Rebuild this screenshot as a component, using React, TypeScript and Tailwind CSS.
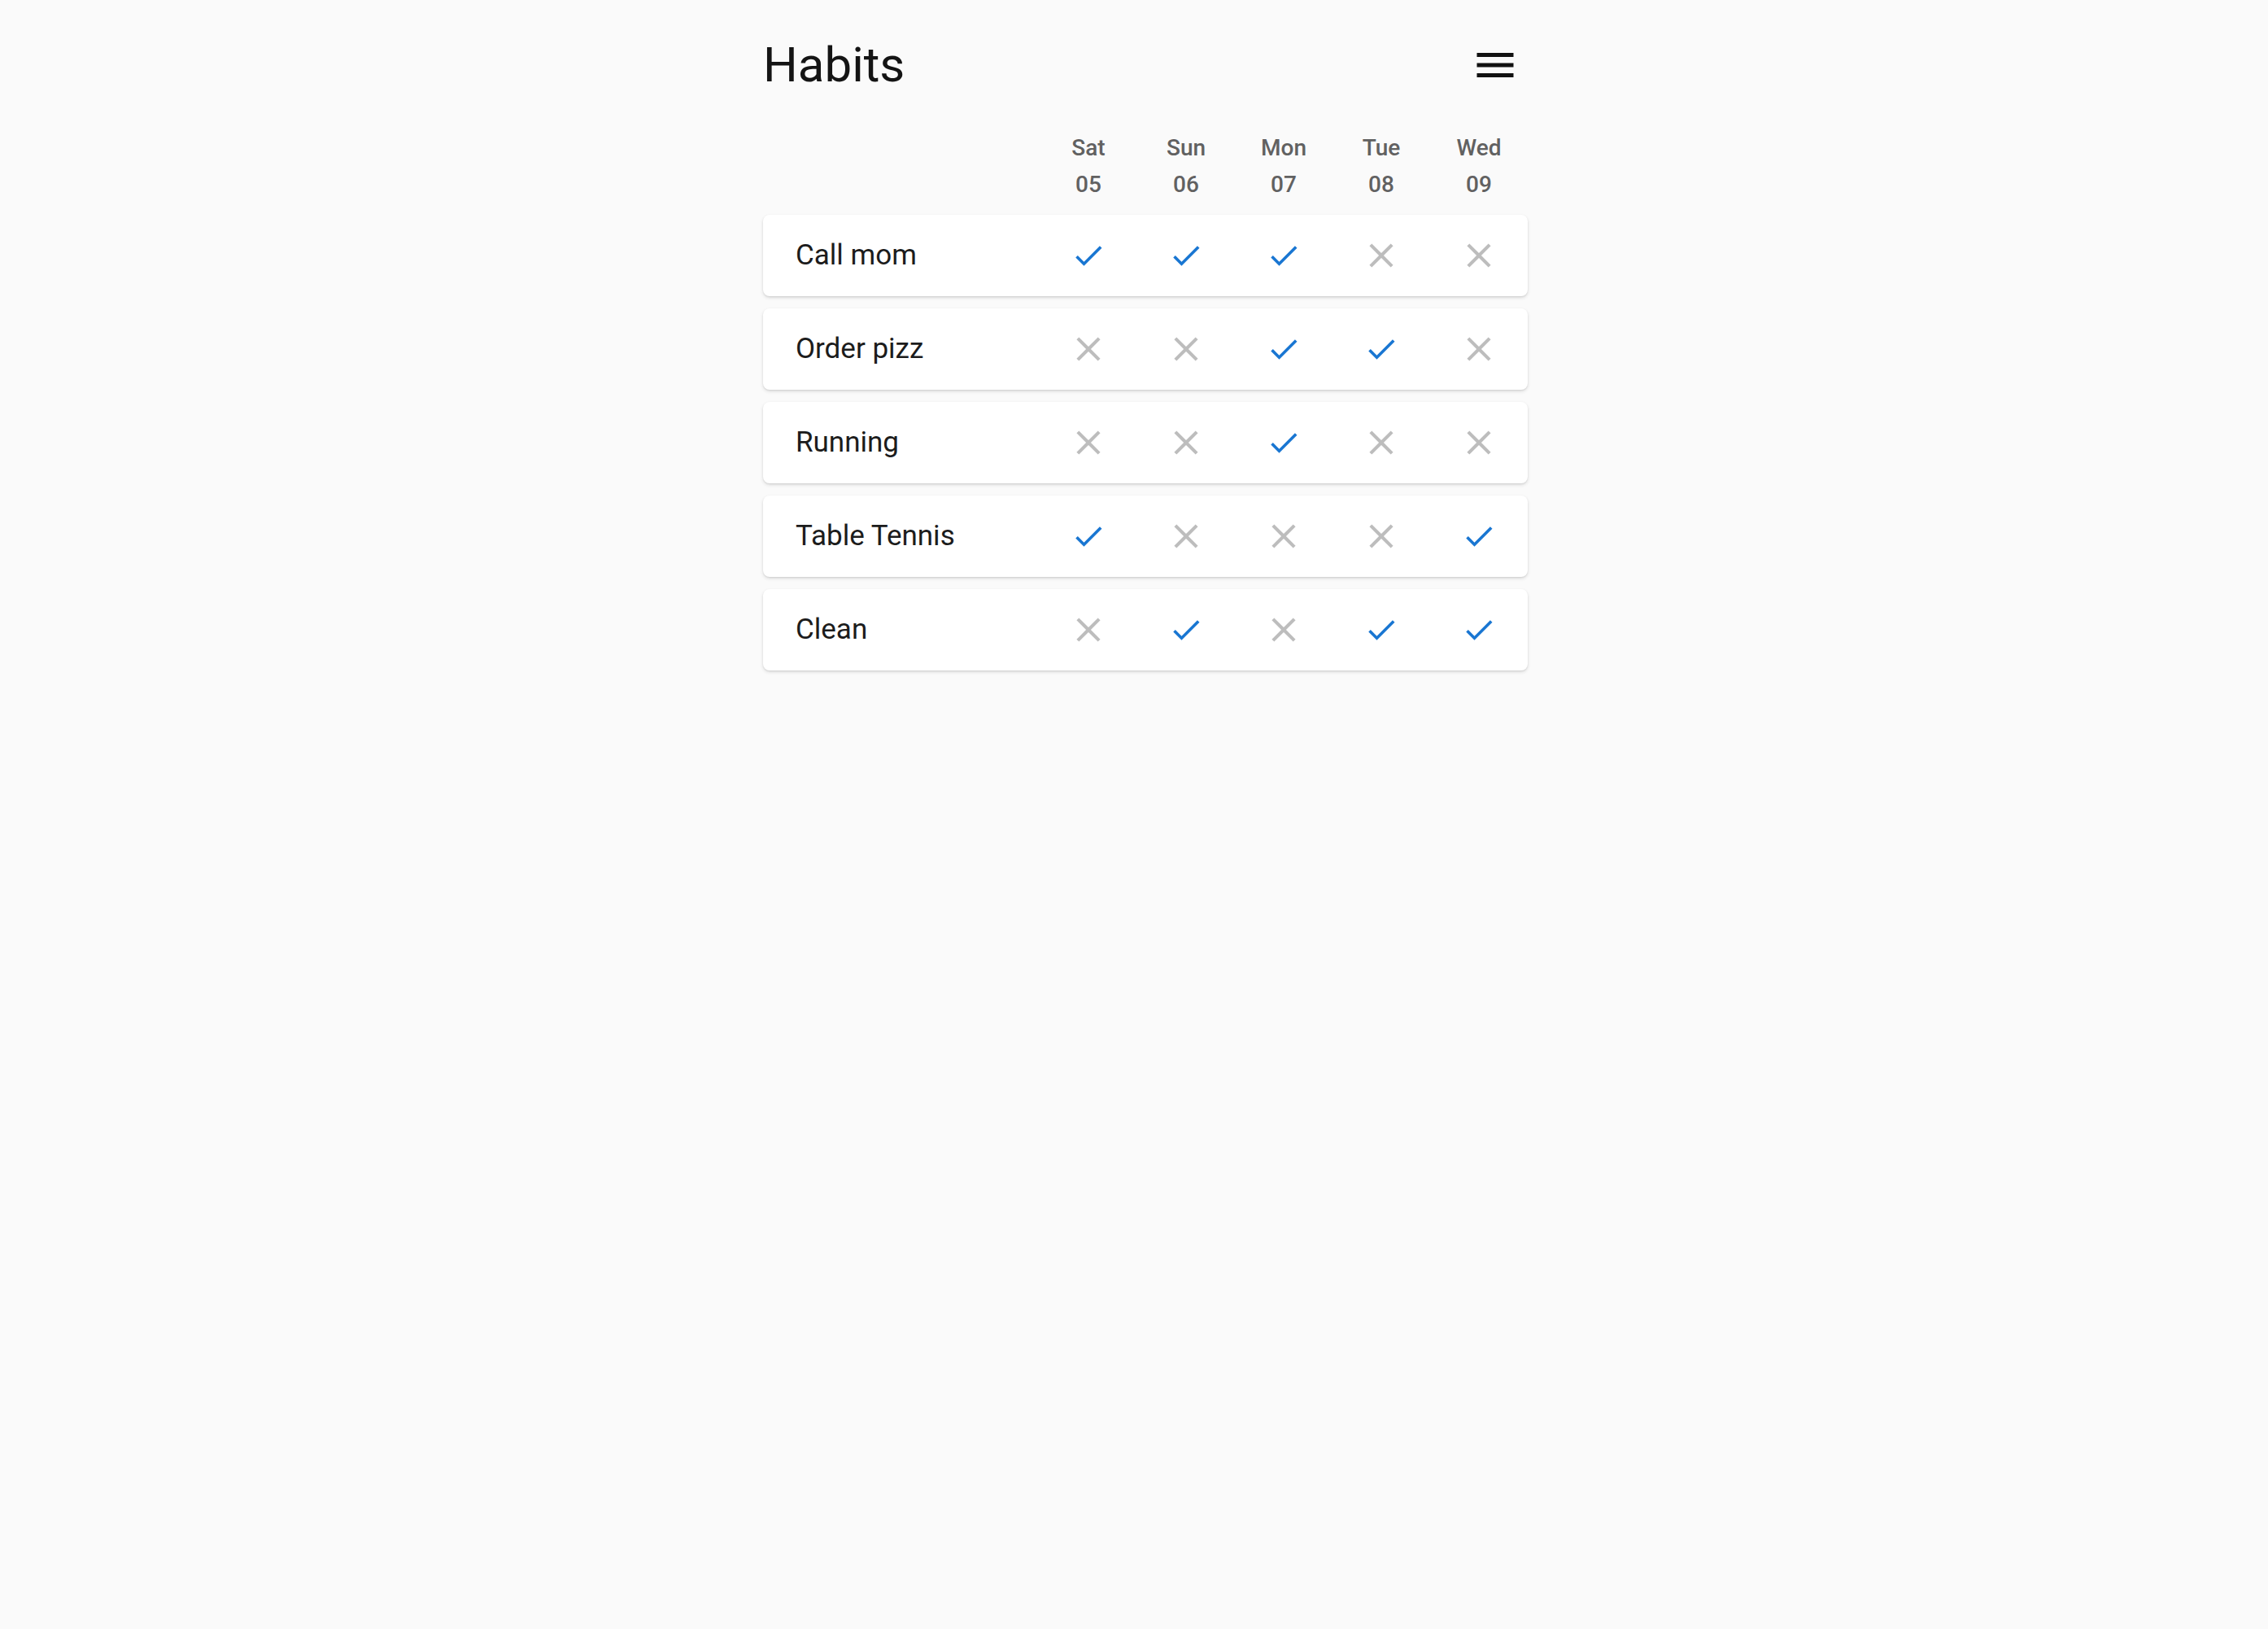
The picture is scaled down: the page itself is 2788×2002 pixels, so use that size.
import React from 'react';

const days = [
  { name: 'Sat', date: '05' },
  { name: 'Sun', date: '06' },
  { name: 'Mon', date: '07' },
  { name: 'Tue', date: '08' },
  { name: 'Wed', date: '09' },
];

const habits: { name: string; done: boolean[] }[] = [
  { name: 'Call mom', done: [true, true, true, false, false] },
  { name: 'Order pizz', done: [false, false, true, true, false] },
  { name: 'Running', done: [false, false, true, false, false] },
  { name: 'Table Tennis', done: [true, false, false, false, true] },
  { name: 'Clean', done: [false, true, false, true, true] },
];

function CheckIcon() {
  return (
    <svg viewBox="0 0 24 24" className="w-[44px] h-[44px] fill-[#1976d2]">
      <path d="M9 16.17L4.83 12l-1.42 1.41L9 19 21 7l-1.41-1.41z" />
    </svg>
  );
}

function CrossIcon() {
  return (
    <svg viewBox="0 0 24 24" className="w-[50px] h-[50px] fill-[#bdbdbd]">
      <path d="M19 6.41L17.59 5 12 10.59 6.41 5 5 6.41 10.59 12 5 17.59 6.41 19 12 13.41 17.59 19 19 17.59 13.41 12z" />
    </svg>
  );
}

function MenuIcon() {
  return (
    <svg viewBox="0 0 24 24" className="w-[60px] h-[60px] fill-[#111111]">
      <path d="M3 18h18v-2H3v2zm0-5h18v-2H3v2zm0-7v2h18V6H3z" />
    </svg>
  );
}

function HabitRow({ name, done }: { name: string; done: boolean[] }) {
  return (
    <div className="flex items-center h-[100px] bg-white rounded-[8px] shadow-[0_2px_4px_rgba(0,0,0,0.12),0_1px_2px_rgba(0,0,0,0.08)]">
      <div className="flex-1 pl-[40px] pb-[1px] text-[35px] text-[#1c1c1c] leading-none">{name}</div>
      {done.map((d, i) => (
        <div key={i} className="w-[120px] flex items-center justify-center">
          {d ? <CheckIcon /> : <CrossIcon />}
        </div>
      ))}
    </div>
  );
}

export default function App() {
  return (
    <div className="min-h-screen bg-[#fafafa] font-['Roboto',sans-serif]">
      <div className="ml-[938px] w-[940px] pt-[50px]">
        <div className="flex items-center justify-between h-[60px]">
          <h1 className="text-[60px] leading-none text-[#141414] font-normal">Habits</h1>
          <div className="mr-[10px]">
            <MenuIcon />
          </div>
        </div>

        <div className="flex mt-[49px] mb-[15px]">
          <div className="flex-1" />
          {days.map((d) => (
            <div
              key={d.name}
              className="w-[120px] flex flex-col items-center text-[28px] leading-[45px] font-medium text-[#616161]"
            >
              <span>{d.name}</span>
              <span>{d.date}</span>
            </div>
          ))}
        </div>

        <div className="flex flex-col gap-[15px]">
          {habits.map((h) => (
            <HabitRow key={h.name} name={h.name} done={h.done} />
          ))}
        </div>
      </div>
    </div>
  );
}
